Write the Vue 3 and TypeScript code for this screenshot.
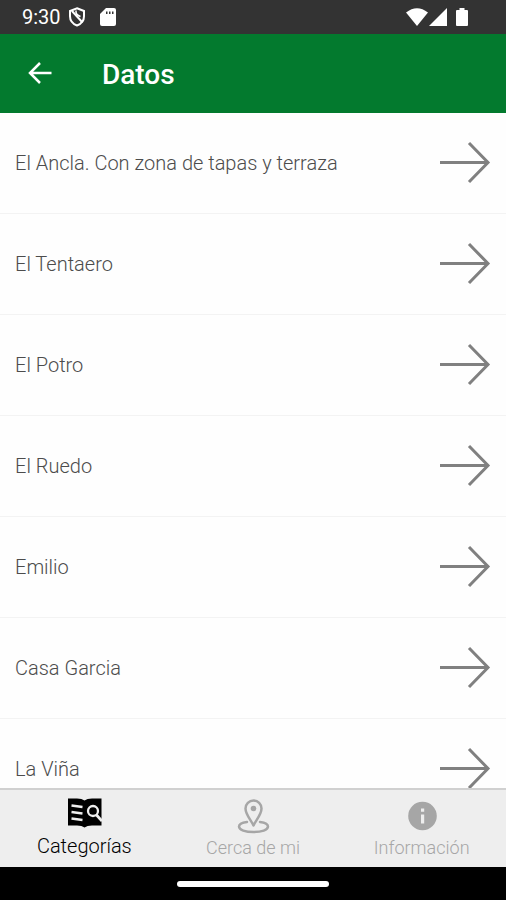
<script setup lang="ts">
import { ref } from 'vue'

interface Place {
  id: number
  name: string
}

type TabId = 'categories' | 'nearby' | 'info'

const places: Place[] = [
  'El Ancla. Con zona de tapas y terraza',
  'El Tentaero',
  'El Potro',
  'El Ruedo',
  'Emilio',
  'Casa Garcia',
  'La Viña',
].map((name, id) => ({ id, name }))

const tabs: { id: TabId; label: string }[] = [
  { id: 'categories', label: 'Categorías' },
  { id: 'nearby', label: 'Cerca de mi' },
  { id: 'info', label: 'Información' },
]

const activeTab = ref<TabId>('categories')
</script>

<template>
  <div class="screen">
    <div class="status">
      <span class="clock">9:30</span>
      <svg class="shield" viewBox="0 0 18 20" aria-hidden="true">
        <path d="M9 1.300 16 4v5.200c0 4.300-2.800 7.600-7 9.300-4.200-1.700-7-5-7-9.300V4z" fill="none" stroke="currentColor" stroke-width="2" />
        <path d="M4 4 14.500 15.500" fill="none" stroke="currentColor" stroke-width="2" />
        <path d="M8 3.500C7.500 7 9 8.500 12.500 9.500" fill="none" stroke="currentColor" stroke-width="1.500" />
      </svg>
      <svg class="card" viewBox="0 0 16 18" aria-hidden="true">
        <path d="M6 0h8q2 0 2 2v14q0 2-2 2H2q-2 0-2-2V6z" fill="currentColor" />
        <path d="M6 3.500h1.500v2.500H6zM9 3.500h1.500v2.500H9zM12 3.500h1.500v2.500H12z" fill="#333" />
      </svg>
      <div class="signals">
        <svg class="wifi" viewBox="0 0 22 18" aria-hidden="true">
          <path d="M0 4.500Q11-4 22 4.500L11 18z" fill="currentColor" />
        </svg>
        <svg class="cell" viewBox="0 0 18 18" aria-hidden="true">
          <path d="M18 0v18H0z" fill="currentColor" />
        </svg>
        <svg class="battery" viewBox="0 0 12 18" aria-hidden="true">
          <path d="M3.500 0h5v2H11q1 0 1 1v14q0 1-1 1H1q-1 0-1-1V3q0-1 1-1h2.500z" fill="currentColor" />
        </svg>
      </div>
    </div>

    <header class="bar">
      <button class="back" type="button" aria-label="Atrás">
        <svg viewBox="0 0 24 22" aria-hidden="true">
          <path d="M23.500 11H2M12 1 2 11l10 10" fill="none" stroke="currentColor" stroke-width="2.500" />
        </svg>
      </button>
      <h1 class="title">Datos</h1>
    </header>

    <main class="content">
      <ul class="list">
        <li v-for="place in places" :key="place.id" class="item">
          <a class="row" href="#">
            <span>{{ place.name }}</span>
            <svg class="arrow" viewBox="0 0 52 44" aria-hidden="true">
              <path d="M1 21.500h48M30 2 49 21.500 30 41" fill="none" stroke="currentColor" stroke-width="3" />
            </svg>
          </a>
        </li>
      </ul>
    </main>

    <nav class="tabs">
      <button
        v-for="tab in tabs"
        :key="tab.id"
        class="tab"
        :class="{ active: tab.id === activeTab }"
        type="button"
        @click="activeTab = tab.id"
      >
        <svg v-if="tab.id === 'categories'" class="icon" viewBox="0 0 36 36" aria-hidden="true">
          <path d="M2 2.500h9q5 0 7.500 2 2.500-2 7.500-2h9.500v27H26q-5 0-7.500 2-2.500-2-7.500-2H2z" fill="currentColor" />
          <path d="M5.500 9.500l11 1.500M5.500 16l11 1.500M5.500 22.500l11 1.500" stroke="#eee" stroke-width="2.300" />
          <circle cx="27" cy="15" r="5" fill="none" stroke="#eee" stroke-width="2.300" />
          <path d="M30.500 19l5.500 6" stroke="#eee" stroke-width="2.800" />
        </svg>
        <svg v-else-if="tab.id === 'nearby'" class="icon" viewBox="0 0 36 36" aria-hidden="true">
          <g fill="none" stroke="currentColor" stroke-width="2.500" stroke-linejoin="round" stroke-linecap="round">
            <path d="M18.500 27.500C16 22 10.500 16.500 10.500 10.500a8 8 0 0 1 16 0C26.500 16.500 21 22 18.500 27.500z" />
            <path d="M12 24C6.500 24.700 4 26.300 4 28.500c0 3.500 6.500 5.500 14.500 5.500s14.500-2 14.500-5.500c0-2.200-2.500-3.800-8-4.500" />
          </g>
          <circle cx="18.500" cy="10.500" r="2.800" fill="currentColor" />
        </svg>
        <svg v-else class="icon" viewBox="0 0 36 36" aria-hidden="true">
          <circle cx="18.500" cy="18" r="14.300" fill="currentColor" />
          <path d="M17 10.500h3.200v3.200h-3.200zM17 16.500h3.200v9h-3.200z" fill="#eee" />
        </svg>
        <span class="label">{{ tab.label }}</span>
      </button>
    </nav>

    <div class="gesture"><div class="handle"></div></div>
  </div>
</template>

<style>
body {
  margin: 0;
}
</style>

<style scoped>
.screen {
  display: flex;
  flex-direction: column;
  height: 100vh;
  overflow: hidden;
  background: #fefefe;
  font-family: Roboto, "Noto Sans", sans-serif;
}

svg {
  display: block;
  flex: none;
}

button {
  padding: 0;
  border: 0;
  background: none;
  font: inherit;
  cursor: pointer;
}

.status {
  display: flex;
  flex: none;
  align-items: center;
  box-sizing: border-box;
  height: 34px;
  padding: 0 38px 0 22px;
  background: #333;
  color: #fff;
}

.clock {
  font-size: 20px;
  line-height: 34px;
}

.shield {
  width: 18px;
  height: 20px;
  margin-left: 7px;
}

.card {
  width: 16px;
  height: 18px;
  margin-left: 14px;
}

.signals {
  display: flex;
  align-items: center;
  margin-left: auto;
}

.wifi {
  width: 22px;
  height: 18px;
}

.cell {
  width: 18px;
  height: 18px;
  margin-left: 1px;
}

.battery {
  width: 12px;
  height: 18px;
  margin-left: 9px;
}

.bar {
  display: flex;
  flex: none;
  align-items: center;
  box-sizing: border-box;
  height: 79px;
  padding: 0 28px;
  background: #037a2e;
  color: #fff;
}

.back {
  display: flex;
  align-items: center;
  width: 74px;
  height: 48px;
  margin-bottom: 2px;
  color: #fff;
}

.back svg {
  width: 24px;
  height: 22px;
}

.title {
  margin: 0;
  padding-top: 2px;
  font-size: 28px;
  font-weight: 500;
  line-height: 36px;
}

.content {
  flex: 1;
  min-height: 0;
  overflow-y: auto;
  scrollbar-width: none;
}

.list {
  margin: 0;
  padding: 0;
  list-style: none;
}

.item {
  border-bottom: 1px solid #f3f3f3;
}

.row {
  display: flex;
  align-items: center;
  justify-content: space-between;
  height: 100px;
  padding: 0 15px;
  color: #4c4c4c;
  font-size: 20px;
  font-weight: 300;
  line-height: 24px;
  text-decoration: none;
}

.arrow {
  width: 52px;
  height: 44px;
  color: #808080;
}

.tabs {
  display: flex;
  flex: none;
  box-sizing: border-box;
  height: 79px;
  border-top: 2px solid #d0d0d0;
  background: #eee;
}

.tab {
  display: flex;
  flex: 1;
  flex-direction: column;
  align-items: center;
  padding-top: 8px;
  color: #a6a6a6;
  font-size: 18px;
}

.active {
  padding-top: 6px;
  color: #000;
  font-size: 20px;
}

.icon {
  width: 36px;
  height: 36px;
}

.label {
  font-weight: 300;
  line-height: 28px;
}

.gesture {
  display: flex;
  flex: none;
  align-items: center;
  justify-content: center;
  height: 33px;
  background: #000;
}

.handle {
  width: 30%;
  height: 6px;
  border-radius: 3px;
  background: #fff;
}
</style>
